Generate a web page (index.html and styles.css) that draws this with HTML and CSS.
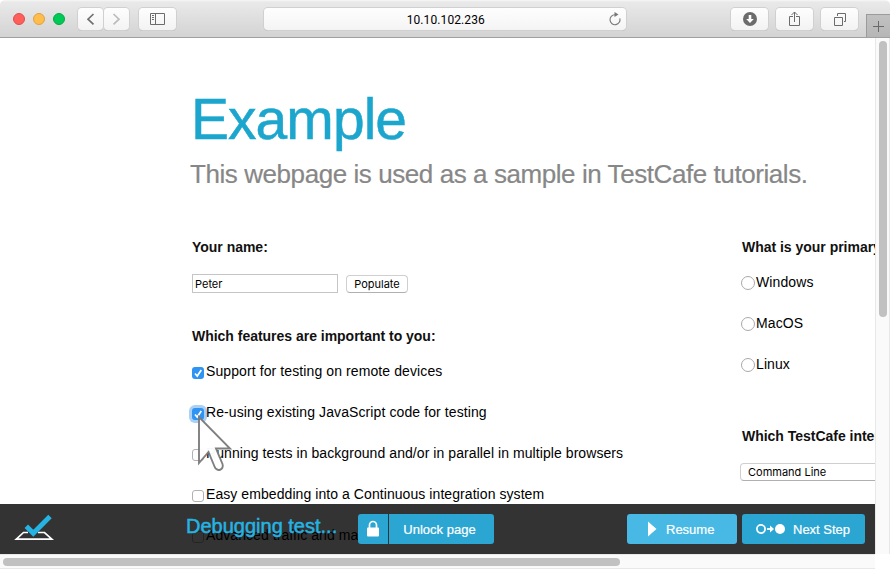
FILE: index.html
```html
<!DOCTYPE html>
<html lang="en">
<head>
<meta charset="utf-8">
<title>Example</title>
<link rel="stylesheet" href="styles.css">
</head>
<body>
<div class="window">
  <header class="toolbar">
    <div class="lights"><i class="red"></i><i class="yellow"></i><i class="green"></i></div>
    <div class="nav">
      <span class="tool"><svg width="25" height="23" viewBox="0 0 25 23"><path d="M15.500 6 10 11.200l5.500 5.200" fill="none" stroke="#707070" stroke-width="1.700"/></svg></span>
      <span class="tool"><svg width="25" height="23" viewBox="0 0 25 23"><path d="M9.500 6l5.500 5.200-5.500 5.200" fill="none" stroke="#bcbcbc" stroke-width="1.700"/></svg></span>
    </div>
    <span class="tool wide side"><svg width="37" height="23" viewBox="0 0 37 23"><path d="M11.500 5.500h14v11h-14zM16.500 5.500v11M13 7.500h2M13 9.500h2M13 11.500h2" fill="none" stroke="#6c6c6c"/></svg></span>
    <div class="address"><span class="url">10.10.102.236</span>
      <svg class="reload" width="14" height="16" viewBox="0 0 14 16"><path d="M8 3.700H7a5 5 0 1 0 4.800 3.600" fill="none" stroke="#777" stroke-width="1.100"/><path d="M6.500 1 10.500 3.500 6.500 6z" fill="#777"/></svg>
    </div>
    <div class="tools">
      <span class="tool wide"><svg width="37" height="23" viewBox="0 0 37 23"><circle cx="19" cy="11" r="7" fill="#6c6c6c"/><path d="M17.700 7h2.600v4h2.500L19 15l-3.800-4h2.500z" fill="#fff"/></svg></span>
      <span class="tool wide"><svg width="37" height="23" viewBox="0 0 37 23"><path d="M17 8.500h-3.500v9h10v-9H20M18.500 14V4M15.500 7l3-3 3 3" fill="none" stroke="#6c6c6c"/></svg></span>
      <span class="tool wide"><svg width="37" height="23" viewBox="0 0 37 23"><path d="M13.500 9.500h8v8h-8zM16.500 8V5.500h8v8H23" fill="none" stroke="#6c6c6c"/></svg></span>
    </div>
    <span class="newtab"><svg width="23" height="23" viewBox="0 0 23 23"><path d="M11.500 6v11M6 11.500h11" stroke="#6a6a6a"/></svg></span>
  </header>
  <div class="frame">
    <main class="page">
      <h1>Example</h1>
      <p class="lead">This webpage is used as a sample in TestCafe tutorials.</p>
      <div class="columns">
        <section class="left">
          <h2 class="t-name">Your name:</h2>
          <div class="name-row"><span class="input">Peter</span><span class="populate">Populate</span></div>
          <h2 class="t-feat">Which features are important to you:</h2>
          <ul class="options features">
            <li><span class="check on"><svg width="12" height="12" viewBox="0 0 12 12"><path d="M3 6.500 5.200 9 9.300 3" fill="none" stroke="#fff" stroke-width="1.700"/></svg></span><span class="wider">Support for testing on remote devices</span></li>
            <li><span class="check on focus"><svg width="12" height="12" viewBox="0 0 12 12"><path d="M3 6.500 5.200 9 9.300 3" fill="none" stroke="#fff" stroke-width="1.700"/></svg></span><span class="wider">Re-using existing JavaScript code for testing</span></li>
            <li><span class="check"></span><span>Running tests in background and/or in parallel in multiple browsers</span></li>
            <li><span class="check"></span><span>Easy embedding into a Continuous integration system</span></li>
            <li><span class="check"></span><span>Advanced traffic and markup analysis</span></li>
          </ul>
        </section>
        <section class="right">
          <h2 class="t-os">What is your primary Operating System:</h2>
          <ul class="options radios">
            <li><span class="radio"></span>Windows</li>
            <li><span class="radio"></span>MacOS</li>
            <li><span class="radio"></span>Linux</li>
          </ul>
          <h2 class="t-iface">Which TestCafe interface do you use:</h2>
          <span class="select">Command Line</span>
        </section>
      </div>
      <svg class="cursor" width="36" height="58" viewBox="0 0 36 58"><path d="M2 3v46l9.500-11 6 14.500c2 6 10 3.500 8-2.500L19 34.500h14z" fill="#fff" stroke="#7c7c7c" stroke-width="1.900"/></svg>
      <footer class="status">
        <svg class="logo" width="40" height="27" viewBox="0 0 40 27"><path d="M14 18.500H9.500L2.300 25.200h35.600L30.500 18.500H24" fill="none" stroke="#fff" stroke-width="1.700"/><path d="M12.300 12.200 19.300 19.300 36 2.500" fill="none" stroke="#24b3e2" stroke-width="4.900"/></svg>
        <span class="message">Debugging test...</span>
        <span class="btn lock"><svg width="12" height="17" viewBox="0 0 12 17"><path d="M2.500 8V5a3.500 3.500 0 0 1 7 0v3" fill="none" stroke="#fff" stroke-width="1.700"/><rect y="7.500" width="12" height="9" rx="1" fill="#fff"/></svg></span>
        <span class="btn unlock">Unlock page</span>
        <span class="btn resume"><svg width="9" height="16" viewBox="0 0 9 16"><path d="M0 .5l8.500 7.500L0 15.500z" fill="#fff"/></svg><b>Resume</b></span>
        <span class="btn next"><svg width="30" height="12" viewBox="0 0 30 12"><circle cx="5" cy="6" r="4.100" fill="none" stroke="#fff" stroke-width="1.700"/><path d="M11 6h5" stroke="#fff" stroke-width="1.800"/><path d="M14 2.500 18 6l-4 3.500z" fill="#fff"/><circle cx="24" cy="6" r="5" fill="#fff"/></svg><b>Next Step</b></span>
      </footer>
    </main>
    <div class="vbar"><i></i></div>
    <div class="hbar"><i></i></div>
    <div class="corner"></div>
  </div>
</div>
</body>
</html>
```
FILE: styles.css
```css
* { box-sizing: border-box; }
body { margin: 0; background: #fff; font: 14px "Liberation Sans", Arial, sans-serif; color: #000; overflow: hidden; }
h1, h2, p, ul { margin: 0; padding: 0; }
svg { display: block; flex: none; }
.window { width: 890px; height: 569px; display: flex; flex-direction: column; overflow: hidden; }

.toolbar { height: 38px; display: flex; align-items: flex-start; padding: 8px 0 0 13px; background: linear-gradient(#f7f7f7 0, #e9e9e9 2px, #d3d3d3 100%); border-bottom: 1px solid #a0a0a0; border-radius: 5px 5px 0 0; }
.lights { display: flex; gap: 8px; width: 65px; padding-top: 5px; }
.lights i { width: 12px; height: 12px; border-radius: 50%; border-width: 1px; border-style: solid; }
.red { background: #ff5f5b; border-color: #e34b48; }
.yellow { background: #ffbd4c; border-color: #e2a03c; }
.green { background: #00ca56; border-color: #04a845; }
.nav { display: flex; gap: 1px; width: 60px; }
.tool { width: 25px; height: 22px; border-radius: 4px; background: linear-gradient(#fefefe, #f3f3f3); box-shadow: 0 0 0 1px #d0d0d0, 0 1px 0 #b5b5b5; display: flex; justify-content: center; }
.wide { width: 37px; }
.side { margin-left: 1px; }
.address { width: 363px; height: 22px; margin-left: 88px; border-radius: 4px; background: linear-gradient(#fefefe, #f4f4f4); box-shadow: 0 0 0 1px #d0d0d0, 0 1px 0 #b5b5b5; display: flex; align-items: center; padding-left: 143px; }
.url { width: 200px; font: 12px/22px Roboto, sans-serif; letter-spacing: .1px; padding-top: 2px; }
.reload { margin: 0 0 0 1px; }
.tools { display: flex; gap: 8px; margin-left: 105px; }
.newtab { width: 24px; height: 23px; margin: 6px 0 0 8px; border: solid #9b9b9b; border-width: 1px 0 0 1px; background: linear-gradient(#c1c1c1, #b6b6b6); }

.frame { display: grid; grid-template: 516px 15px / 875px 15px; }
.page { position: relative; overflow: hidden; padding: 51px 0 0 190px; background: #fff; }
h1 { font-size: 57px; line-height: 60px; height: 60px; font-weight: 400; color: #1ca6cd; letter-spacing: -.95px; padding-left: 1px; white-space: nowrap; -webkit-text-stroke: .5px #1ca6cd; }
.lead { margin-top: 10px; font-size: 26px; line-height: 30px; color: #878787; letter-spacing: -.43px; white-space: nowrap; -webkit-text-stroke: .2px #878787; }
.columns { display: grid; grid-template-columns: 550px 400px; padding: 48px 0 0 2px; }
h2 { font-size: 14px; line-height: 20px; font-weight: 700; color: #111; letter-spacing: -.02px; white-space: nowrap; }
.name-row { display: flex; align-items: flex-end; gap: 8px; height: 19px; margin: 17px 0 33px; font: 11px/17px Inter, sans-serif; }
.input { width: 146px; height: 19px; border: 1px solid #c5c5c5; padding: 1px 2px; }
.populate { width: 62px; height: 18px; border: 1px solid #cfcfcf; border-bottom-color: #b0b0b0; border-radius: 4px; text-align: center; line-height: 16px; }
.options { list-style: none; display: grid; grid-auto-rows: 20px; row-gap: 21px; margin-top: 15px; line-height: 20px; white-space: nowrap; }
.options li { display: flex; align-items: center; }
.features { letter-spacing: .07px; }
.features .wider { letter-spacing: .1px; }
.check { width: 12px; height: 12px; margin: 3px 2px 0 0; border: 1px solid #b2b2b2; border-radius: 3px; background: #fff; }
.check.on { background: #2f93f3; border: 0; }
.focus { box-shadow: 0 0 0 3px #abd0f5; }
.radios { margin-left: -1px; letter-spacing: .1px; }
.radio { width: 14px; height: 14px; border: 1px solid #aaa; border-radius: 50%; margin: 2px 1px 0 0; }
.t-iface { margin-top: 52px; }
.select { display: block; width: 180px; height: 18px; margin: 17px 0 0 -2px; padding-left: 7px; border: 1px solid #cfcfcf; border-bottom-color: #b0b0b0; border-radius: 4px; font: 11px/16px Inter, sans-serif; }
.cursor { position: absolute; left: 197px; top: 376px; opacity: .97; }

.status { position: absolute; left: 0; right: 0; bottom: 0; height: 50px; background: rgba(0, 0, 0, .8); display: flex; align-items: flex-start; padding: 10px 10px 0 14px; color: #fff; }
.message { width: 172px; margin-left: 132px; font-size: 20px; line-height: 24px; color: #24b3e2; -webkit-text-stroke: .5px #24b3e2; white-space: nowrap; }
.btn { height: 30px; display: flex; align-items: center; justify-content: center; background: #2ba5d2; border-radius: 3px; font-size: 13px; -webkit-text-stroke: .2px #fff; white-space: nowrap; }
.btn b { font-weight: 400; }
.lock { width: 30px; border-radius: 3px 0 0 3px; padding-bottom: 2px; }
.unlock { width: 105px; margin-left: 1px; border-radius: 0 3px 3px 0; padding-right: 4px; }
.resume { width: 110px; margin-left: auto; margin-right: 5px; background: #48b8e4; justify-content: flex-start; padding-left: 21px; gap: 9px; }
.next { width: 123px; justify-content: flex-start; padding-left: 14px; gap: 7px; }

.vbar { background: #fafafa; border: solid #e8e8e8; border-width: 0 1px; padding: 3px 0 0 3px; }
.vbar i { display: block; width: 8px; height: 276px; border-radius: 4px; background: #c1c1c1; }
.hbar { background: #fafafa; border: solid #e8e8e8; border-width: 1px 0; padding: 3px 0 0 3px; }
.hbar i { display: block; width: 617px; height: 8px; border-radius: 4px; background: #c1c1c1; }
.corner { background: #fff; }
```
